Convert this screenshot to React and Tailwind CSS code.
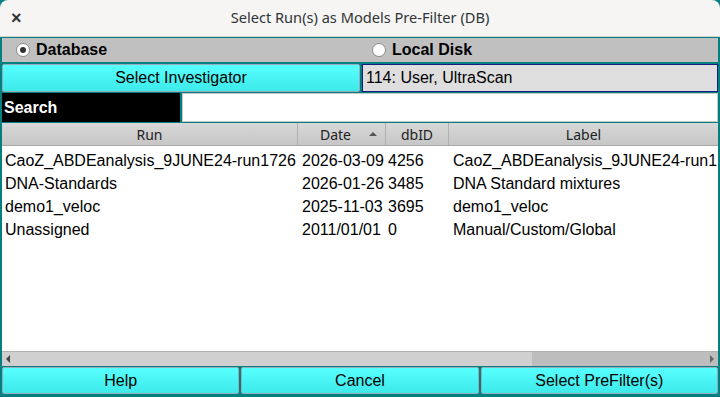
import React from "react";

const rows = [
  { run: "CaoZ_ABDEanalysis_9JUNE24-run1726", date: "2026-03-09", id: "4256", label: "CaoZ_ABDEanalysis_9JUNE24-run1726" },
  { run: "DNA-Standards", date: "2026-01-26", id: "3485", label: "DNA Standard mixtures" },
  { run: "demo1_veloc", date: "2025-11-03", id: "3695", label: "demo1_veloc" },
  { run: "Unassigned", date: "2011/01/01", id: "0", label: "Manual/Custom/Global" },
];

function Radio({ checked, label }) {
  return (
    <div className="flex items-center gap-[6px]">
      <span className="w-[14px] h-[14px] rounded-full bg-white border border-[#8a8a8a] flex items-center justify-center">
        {checked && <span className="w-[6px] h-[6px] rounded-full bg-[#333]" />}
      </span>
      <span className="font-bold text-[16px] text-black">{label}</span>
    </div>
  );
}

function CyanButton({ children, className = "" }) {
  return (
    <div
      className={
        "flex items-center justify-center bg-gradient-to-b from-[#58ffff] to-[#3ce9e9] border border-[#9ab] rounded-[2px] text-[16px] text-black " +
        className
      }
    >
      {children}
    </div>
  );
}

export default function App() {
  return (
    <div
      className="w-[720px] h-[397px] bg-[#047f7f] flex flex-col overflow-hidden"
      style={{ fontFamily: '"Liberation Sans", Arial, sans-serif' }}
    >
      {/* title bar */}
      <div className="h-[37px] bg-[#f6f5f4] rounded-t-[8px] flex items-center relative shrink-0 border-b border-[#d8d4d0]">
        <span className="absolute left-[11px] top-[8px] text-[18px] leading-[20px] text-[#2e3436] font-bold">×</span>
        <div
          className="flex-1 text-center text-[14.6px] text-[#2e3436]"
          style={{ fontFamily: '"Noto Sans", sans-serif' }}
        >
          Select Run(s) as Models Pre-Filter (DB)
        </div>
      </div>

      <div className="flex-1 flex flex-col px-[2px] pt-[1px] pb-[2px]">
        {/* radio row */}
        <div className="h-[24px] bg-[#c0c0c0] flex items-center shrink-0">
          <div className="w-[356px] pl-[14px]">
            <Radio checked label="Database" />
          </div>
          <div className="pl-[14px]">
            <Radio label="Local Disk" />
          </div>
        </div>

        {/* investigator row */}
        <div className="h-[28px] mt-[2px] flex gap-[2px] shrink-0">
          <CyanButton className="w-[358px]">Select Investigator</CyanButton>
          <div className="flex-1 bg-[#dedede] border border-[#1a1a80] flex items-center pl-[3px] text-[16px] text-black">
            114: User, UltraScan
          </div>
        </div>

        {/* search row */}
        <div className="h-[29px] mt-[1px] flex gap-[2px] shrink-0">
          <div className="w-[178px] bg-black text-white font-bold text-[16px] flex items-center pl-[2px]">Search</div>
          <div className="flex-1 bg-white border border-[#c8c8c8]" />
        </div>

        {/* table */}
        <div className="h-[243px] mt-[1px] bg-white flex flex-col shrink-0 overflow-hidden">
          <div
            className="h-[23px] flex bg-gradient-to-b from-[#d8d8d8] to-[#c6c6c6] border-b border-[#a8a8a8] text-[14px] text-[#222] shrink-0"
            style={{ fontFamily: '"Noto Sans", sans-serif' }}
          >
            <div className="w-[296px] flex items-center justify-center border-r border-[#b0b0b0]">Run</div>
            <div className="w-[88px] flex items-center justify-center border-r border-[#b0b0b0] relative">
              <span className="mr-[12px]">Date</span>
              <span className="absolute right-[8px] top-[9px] w-0 h-0 border-l-[4px] border-r-[4px] border-b-[4px] border-l-transparent border-r-transparent border-b-[#555]" />
            </div>
            <div className="w-[63px] flex items-center justify-center border-r border-[#b0b0b0]">dbID</div>
            <div className="flex-1 flex items-center justify-center">Label</div>
          </div>

          <div className="flex-1 pt-[3px] text-[16px] text-black">
            {rows.map((r) => (
              <div key={r.id} className="h-[23px] flex items-center whitespace-nowrap">
                <div className="w-[296px] pl-[3px]">{r.run}</div>
                <div className="w-[88px] pl-[4px]">{r.date}</div>
                <div className="w-[63px] pl-[2px]">{r.id}</div>
                <div className="flex-1 pl-[4px] overflow-hidden">{r.label}</div>
              </div>
            ))}
          </div>

          {/* horizontal scrollbar */}
          <div className="h-[15px] flex items-center bg-[#bdbdbd] border-t border-[#b0b0b0] shrink-0">
            <div className="w-[12px] h-full flex items-center justify-center bg-[#cfcfcf]">
              <span className="w-0 h-0 border-t-[4px] border-b-[4px] border-r-[4px] border-t-transparent border-b-transparent border-r-[#444]" />
            </div>
            <div className="w-[518px] h-full bg-[#d0d0d0]" />
            <div className="flex-1 h-full" />
            <div className="w-[12px] h-full flex items-center justify-center">
              <span className="w-0 h-0 border-t-[4px] border-b-[4px] border-l-[4px] border-t-transparent border-b-transparent border-l-[#666]" />
            </div>
          </div>
        </div>

        {/* bottom buttons */}
        <div className="h-[27px] mt-[1px] flex gap-[2px] shrink-0">
          <CyanButton className="flex-1">Help</CyanButton>
          <CyanButton className="flex-1">Cancel</CyanButton>
          <CyanButton className="flex-1">Select PreFilter(s)</CyanButton>
        </div>
      </div>
    </div>
  );
}
